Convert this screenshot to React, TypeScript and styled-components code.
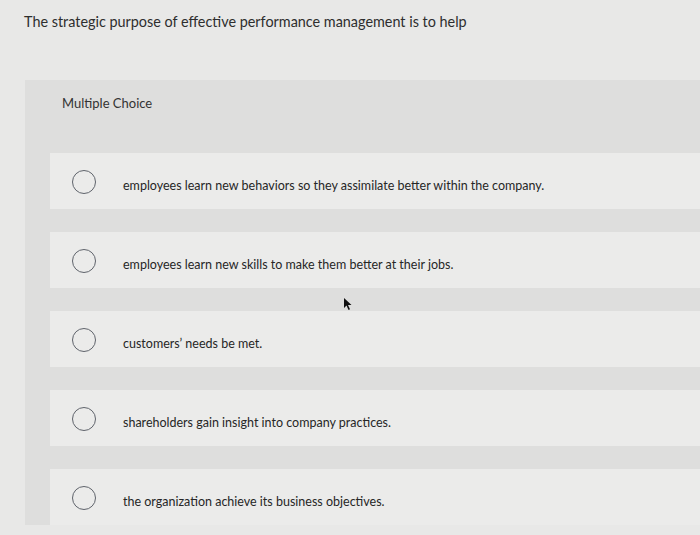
import React from "react";
import styled, { createGlobalStyle } from "styled-components";

const Global = createGlobalStyle`
  html, body { margin: 0; padding: 0; background: #e8e8e7; }
  body { font-family: "Lato", "Liberation Sans", sans-serif; color: #2b2b2b; }
`;

const Page = styled.div`
  position: relative;
  width: 700px;
  height: 535px;
  overflow: hidden;
  background: #e8e8e7;
`;

const Question = styled.h1`
  margin: 0;
  padding: 13px 0 0 24px;
  height: 80px;
  box-sizing: border-box;
  font-size: 14.4px;
  font-weight: 400;
  color: #2e2e2e;
`;

const Panel = styled.section`
  margin-left: 25px;
  background: #dededd;
`;

const PanelHeader = styled.div`
  height: 45px;
  display: flex;
  align-items: center;
  padding-left: 37px;
  font-size: 13px;
  color: #333;
`;

const Options = styled.div`
  display: flex;
  flex-direction: column;
  gap: 23px;
  padding: 28px 0 0 25px;
`;

const Option = styled.label`
  height: 56px;
  display: flex;
  align-items: center;
  padding: 8px 0 0 22px;
  box-sizing: border-box;
  background: #ebebea;
  font-size: 12.5px;
  color: #262626;
  cursor: pointer;
`;

const Radio = styled.span`
  width: 22px;
  height: 22px;
  flex: none;
  border: 1.5px solid #5f636b;
  border-radius: 50%;
  margin-right: 27px;
  margin-top: -6px;
`;

const Cursor = styled.svg`
  position: absolute;
  left: 343px;
  top: 297px;
`;

const options = [
  "employees learn new behaviors so they assimilate better within the company.",
  "employees learn new skills to make them better at their jobs.",
  "customers\u2019 needs be met.",
  "shareholders gain insight into company practices.",
  "the organization achieve its business objectives.",
];

export default function App() {
  return (
    <Page>
      <Global />
      <Question>The strategic purpose of effective performance management is to help</Question>
      <Panel>
        <PanelHeader>Multiple Choice</PanelHeader>
        <Options>
          {options.map((t) => (
            <Option key={t}>
              <Radio />
              {t}
            </Option>
          ))}
        </Options>
      </Panel>
      <Cursor width="10" height="14" viewBox="0 0 10 14">
        <path d="M1 1 L1 11 L3.5 8.5 L5.5 13 L7 12.3 L5 8 L8.5 8 Z" fill="#111" />
      </Cursor>
    </Page>
  );
}
